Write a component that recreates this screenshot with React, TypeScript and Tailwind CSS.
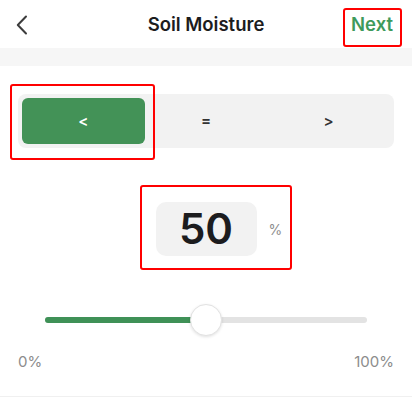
import React from 'react';

const App: React.FC = () => {
  const value = 50;

  return (
    <div
      className="relative h-[397px] w-[412px] overflow-hidden bg-white text-[#1c1c1e]"
      style={{ fontFamily: 'Inter, "Noto Sans", sans-serif' }}
    >
      {/* Header */}
      <header className="grid h-12 grid-cols-[64px_1fr_64px] items-center pt-[2px]">
        <button className="flex h-full items-center pl-4 text-[#3c3c3c]">
          <svg width="12" height="20" viewBox="0 0 12 20" fill="none">
            <path d="M10 1.5 1.8 10l8.2 8.5" stroke="currentColor" strokeWidth="2" strokeLinecap="round" strokeLinejoin="round" />
          </svg>
        </button>
        <h1 className="text-center text-[18.5px] font-semibold">Soil Moisture</h1>
        <button className="pr-[19px] text-right text-[18.5px] font-semibold text-[#3e9a5c]">Next</button>
      </header>

      {/* Divider band */}
      <div className="h-[18px] bg-[#f6f6f6]" />

      {/* Comparator segmented control */}
      <div className="mx-[18px] mt-7 grid h-[54px] grid-cols-3 rounded-lg bg-[#f2f2f2] p-1 text-[15px] font-semibold">
        <button className="rounded-md bg-[#439257] text-white">&lt;</button>
        <button className="text-[#333]">=</button>
        <button className="text-[#333]">&gt;</button>
      </div>

      {/* Value */}
      <div className="mt-[54px] grid grid-cols-[1fr_auto_1fr] items-center">
        <div />
        <div className="flex h-[54px] w-[101px] items-center justify-center rounded-[10px] bg-[#f2f2f2] text-[42px] font-semibold leading-none">
          {value}
        </div>
        <span className="pl-3 text-[14px] text-[#8e8e8e]">%</span>
      </div>

      {/* Slider */}
      <div className="relative mx-[45px] mt-[48px] flex h-8 items-center">
        <div className="h-[6px] w-full rounded-full bg-[#e3e3e3]">
          <div className="h-full rounded-full bg-[#3f9157]" style={{ width: `${value}%` }} />
        </div>
        <div
          className="absolute top-0 h-8 w-8 -translate-x-1/2 rounded-full border border-[#e2e2e2] bg-white shadow-[0_1px_3px_rgba(0,0,0,0.12)]"
          style={{ left: `${value}%` }}
        />
      </div>

      <div className="mt-[15px] flex justify-between px-[18px] text-[15px] text-[#8c8c8c]">
        <span>0%</span>
        <span>100%</span>
      </div>

      <div className="absolute bottom-0 left-0 right-0 h-px bg-[#f0f0f0]" />

      {/* Annotation boxes */}
      <div className="pointer-events-none absolute left-[343px] top-[8px] h-[39px] w-[59px] rounded-[3px] border-2 border-[#ff0000]" />
      <div className="pointer-events-none absolute left-[10px] top-[84px] h-[76px] w-[145px] rounded-[3px] border-2 border-[#ff0000]" />
      <div className="pointer-events-none absolute left-[140px] top-[185px] h-[85px] w-[152px] rounded-[3px] border-2 border-[#ff0000]" />
    </div>
  );
};

export default App;
